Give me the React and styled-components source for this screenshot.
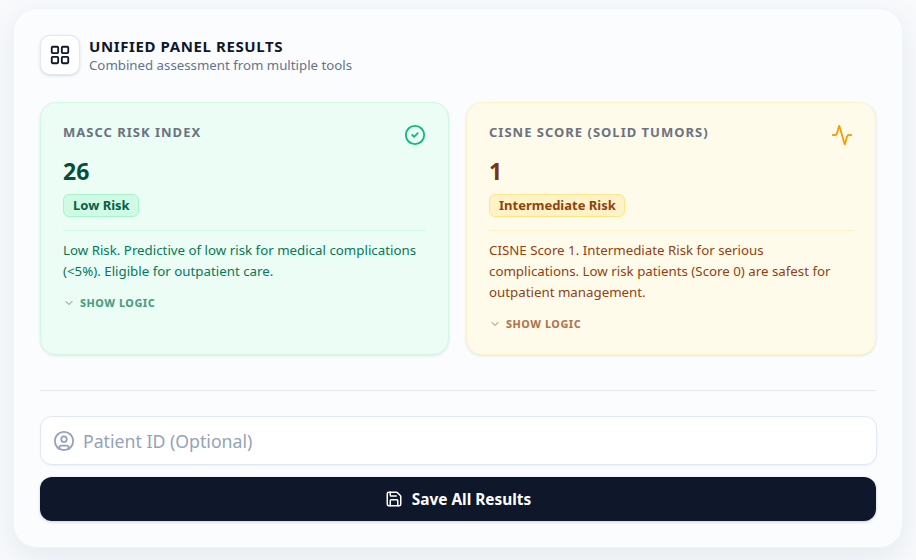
import React from 'react';
import styled, { createGlobalStyle } from 'styled-components';
import { LayoutGrid, CircleCheck, Activity, ChevronDown, CircleUser, Save } from 'lucide-react';

const GlobalStyle = createGlobalStyle`
  html, body {
    margin: 0;
    padding: 0;
    background: #f8fafc;
    font-family: "Noto Sans", "Open Sans", sans-serif;
  }
  * {
    box-sizing: border-box;
  }
`;

const Page = styled.div`
  width: 916px;
  height: 560px;
  padding: 8px 13px 12px;
  overflow: hidden;
`;

const Panel = styled.section`
  height: 540px;
  padding: 26px;
  background: #fbfcfe;
  border: 1px solid #f1f5f9;
  border-radius: 24px;
  box-shadow: 0 10px 30px rgba(100, 116, 139, 0.12);
`;

const Header = styled.header`
  display: flex;
  align-items: center;
  gap: 9px;
  margin-bottom: 27px;
`;

const IconBox = styled.div`
  width: 40px;
  height: 40px;
  display: flex;
  align-items: center;
  justify-content: center;
  background: #fff;
  border: 1px solid #e2e8f0;
  border-radius: 10px;
  box-shadow: 0 1px 3px rgba(15, 23, 42, 0.14);
  color: #0f172a;
`;

const Title = styled.h2`
  margin: 0;
  font-size: 15px;
  line-height: 20px;
  font-weight: 700;
  letter-spacing: 0.6px;
  color: #0f172a;
`;

const Subtitle = styled.p`
  margin: 0;
  font-size: 13.25px;
  line-height: 19px;
  color: #64748b;
`;

const Cards = styled.div`
  display: grid;
  grid-template-columns: 409px 410px;
  gap: 17px;
`;

const Card = styled.article`
  height: 253px;
  padding: 21px 22px;
  border-radius: 16px;
  border: 1px solid ${p => (p.$tone === 'green' ? '#d1fae5' : '#fef3c7')};
  background: ${p => (p.$tone === 'green' ? '#ecfdf5' : '#fffbeb')};
  box-shadow: 0 1px 3px rgba(15, 23, 42, 0.1);
`;

const CardTop = styled.div`
  display: flex;
  justify-content: space-between;
  align-items: flex-start;
`;

const CardLabel = styled.h3`
  margin: 0;
  font-size: 13px;
  line-height: 17px;
  font-weight: 700;
  letter-spacing: 1px;
  color: #6b7280;
`;

const Score = styled.div`
  margin-top: 9px;
  font-size: 23px;
  line-height: 32px;
  font-weight: 700;
  color: ${p => (p.$tone === 'green' ? '#064e3b' : '#78350f')};
`;

const Badge = styled.span`
  display: inline-block;
  margin-top: 7px;
  padding: 0 8px 0 9px;
  height: 23px;
  line-height: 21px;
  font-size: 13px;
  font-weight: 700;
  border-radius: 6px;
  border: 1px solid ${p => (p.$tone === 'green' ? '#a7f3d0' : '#fde68a')};
  background: ${p => (p.$tone === 'green' ? '#d1fae5' : '#fef3c7')};
  color: ${p => (p.$tone === 'green' ? '#065f46' : '#92400e')};
`;

const Divider = styled.div`
  height: 1px;
  margin-top: 13px;
  background: ${p => (p.$tone === 'green' ? '#d1fae5' : '#fef3c7')};
`;

const Description = styled.p`
  margin: 9px 0 0;
  font-size: 13.3px;
  line-height: 21px;
  color: ${p => (p.$tone === 'green' ? '#047857' : '#92400e')};
`;

const LogicToggle = styled.div`
  display: flex;
  align-items: center;
  gap: 5px;
  margin-top: 14px;
  font-size: 10.8px;
  line-height: 14px;
  font-weight: 800;
  letter-spacing: 0.5px;
  color: ${p => (p.$tone === 'green' ? '#047857' : '#92400e')};
  opacity: 0.7;
`;

const Rule = styled.hr`
  height: 1px;
  margin: 35px 0 25px;
  border: 0;
  background: #e2e8f0;
`;

const InputBox = styled.label`
  display: flex;
  align-items: center;
  gap: 6px;
  height: 49px;
  margin-right: -1px;
  padding: 0 12px;
  background: #fff;
  border: 1px solid #e2e8f0;
  border-radius: 12px;
  box-shadow: 0 1px 2px rgba(15, 23, 42, 0.05);
  color: #94a3b8;
`;

const Input = styled.input`
  flex: 1;
  border: 0;
  outline: 0;
  background: transparent;
  font: inherit;
  font-size: 17.7px;
  color: #0f172a;

  &::placeholder {
    color: #94a3b8;
    opacity: 1;
  }
`;

const SaveButton = styled.button`
  display: flex;
  align-items: center;
  justify-content: center;
  gap: 9px;
  width: 100%;
  height: 44px;
  margin-top: 12px;
  border: 0;
  border-radius: 12px;
  background: #0f172a;
  color: #fff;
  font: inherit;
  font-size: 15.4px;
  font-weight: 700;
  box-shadow: 0 1px 3px rgba(15, 23, 42, 0.2);
`;

const results = [
  {
    tone: 'green',
    label: 'MASCC RISK INDEX',
    score: '26',
    badge: 'Low Risk',
    text: 'Low Risk. Predictive of low risk for medical complications (<5%). Eligible for outpatient care.',
    icon: <CircleCheck size={22} color="#10b981" strokeWidth={2} />,
  },
  {
    tone: 'amber',
    label: 'CISNE SCORE (SOLID TUMORS)',
    score: '1',
    badge: 'Intermediate Risk',
    text: 'CISNE Score 1. Intermediate Risk for serious complications. Low risk patients (Score 0) are safest for outpatient management.',
    icon: <Activity size={22} color="#f59e0b" strokeWidth={2} />,
  },
];

export default function App() {
  return (
    <Page>
      <GlobalStyle />
      <Panel>
        <Header>
          <IconBox>
            <LayoutGrid size={22} strokeWidth={2} />
          </IconBox>
          <div>
            <Title>UNIFIED PANEL RESULTS</Title>
            <Subtitle>Combined assessment from multiple tools</Subtitle>
          </div>
        </Header>

        <Cards>
          {results.map(r => (
            <Card key={r.label} $tone={r.tone}>
              <CardTop>
                <CardLabel>{r.label}</CardLabel>
                {r.icon}
              </CardTop>
              <Score $tone={r.tone}>{r.score}</Score>
              <Badge $tone={r.tone}>{r.badge}</Badge>
              <Divider $tone={r.tone} />
              <Description $tone={r.tone}>{r.text}</Description>
              <LogicToggle $tone={r.tone}>
                <ChevronDown size={12} strokeWidth={2} />
                SHOW LOGIC
              </LogicToggle>
            </Card>
          ))}
        </Cards>

        <Rule />

        <InputBox>
          <CircleUser size={22} strokeWidth={2} />
          <Input placeholder="Patient ID (Optional)" />
        </InputBox>

        <SaveButton>
          <Save size={18} strokeWidth={2} />
          Save All Results
        </SaveButton>
      </Panel>
    </Page>
  );
}
